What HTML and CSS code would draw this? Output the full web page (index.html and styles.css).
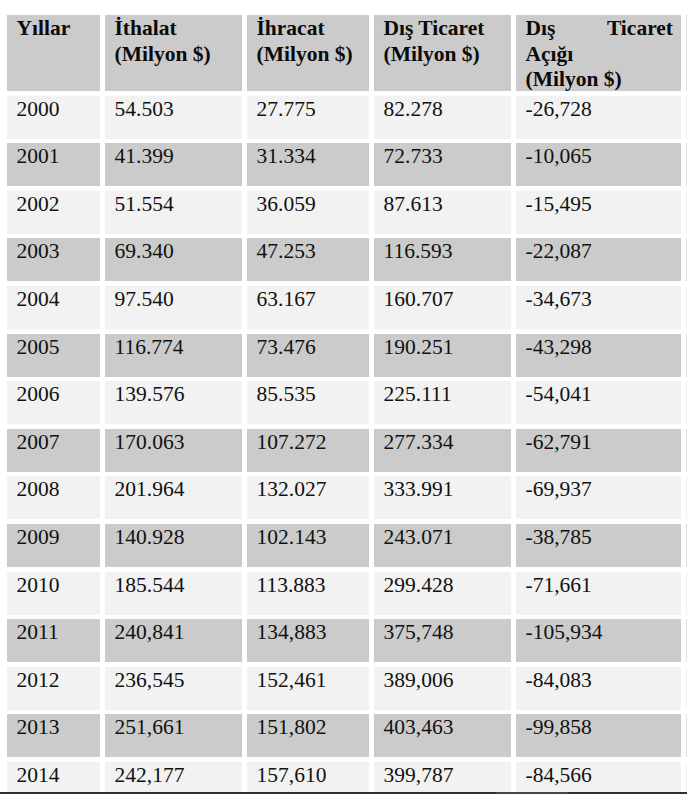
FILE: index.html
```html
<!DOCTYPE html>
<html lang="tr">
<head>
<meta charset="utf-8">
<title>Dış Ticaret</title>
<link rel="stylesheet" href="styles.css">
</head>
<body>
<div class="page">
  <div class="grid">
    <div class="cell head">Yıllar</div>
    <div class="cell head">İthalat<br>(Milyon $)</div>
    <div class="cell head">İhracat<br>(Milyon $)</div>
    <div class="cell head">Dış Ticaret<br>(Milyon $)</div>
    <div class="cell head just">Dış Ticaret Açığı<br>(Milyon $)</div>
    <div class="edge head"></div>

    <div class="cell light">2000</div><div class="cell light">54.503</div><div class="cell light">27.775</div><div class="cell light">82.278</div><div class="cell light">-26,728</div><div class="edge light"></div>
    <div class="cell dark">2001</div><div class="cell dark">41.399</div><div class="cell dark">31.334</div><div class="cell dark">72.733</div><div class="cell dark">-10,065</div><div class="edge dark"></div>
    <div class="cell light">2002</div><div class="cell light">51.554</div><div class="cell light">36.059</div><div class="cell light">87.613</div><div class="cell light">-15,495</div><div class="edge light"></div>
    <div class="cell dark">2003</div><div class="cell dark">69.340</div><div class="cell dark">47.253</div><div class="cell dark">116.593</div><div class="cell dark">-22,087</div><div class="edge dark"></div>
    <div class="cell light">2004</div><div class="cell light">97.540</div><div class="cell light">63.167</div><div class="cell light">160.707</div><div class="cell light">-34,673</div><div class="edge light"></div>
    <div class="cell dark">2005</div><div class="cell dark">116.774</div><div class="cell dark">73.476</div><div class="cell dark">190.251</div><div class="cell dark">-43,298</div><div class="edge dark"></div>
    <div class="cell light">2006</div><div class="cell light">139.576</div><div class="cell light">85.535</div><div class="cell light">225.111</div><div class="cell light">-54,041</div><div class="edge light"></div>
    <div class="cell dark">2007</div><div class="cell dark">170.063</div><div class="cell dark">107.272</div><div class="cell dark">277.334</div><div class="cell dark">-62,791</div><div class="edge dark"></div>
    <div class="cell light">2008</div><div class="cell light">201.964</div><div class="cell light">132.027</div><div class="cell light">333.991</div><div class="cell light">-69,937</div><div class="edge light"></div>
    <div class="cell dark">2009</div><div class="cell dark">140.928</div><div class="cell dark">102.143</div><div class="cell dark">243.071</div><div class="cell dark">-38,785</div><div class="edge dark"></div>
    <div class="cell light">2010</div><div class="cell light">185.544</div><div class="cell light">113.883</div><div class="cell light">299.428</div><div class="cell light">-71,661</div><div class="edge light"></div>
    <div class="cell dark">2011</div><div class="cell dark">240,841</div><div class="cell dark">134,883</div><div class="cell dark">375,748</div><div class="cell dark">-105,934</div><div class="edge dark"></div>
    <div class="cell light">2012</div><div class="cell light">236,545</div><div class="cell light">152,461</div><div class="cell light">389,006</div><div class="cell light">-84,083</div><div class="edge light"></div>
    <div class="cell dark">2013</div><div class="cell dark">251,661</div><div class="cell dark">151,802</div><div class="cell dark">403,463</div><div class="cell dark">-99,858</div><div class="edge dark"></div>
    <div class="cell light">2014</div><div class="cell light">242,177</div><div class="cell light">157,610</div><div class="cell light">399,787</div><div class="cell light">-84,566</div><div class="edge light"></div>
  </div>
</div>
<div class="scrollbar"><div class="thumb"></div></div>
</body>
</html>
```

FILE: styles.css
```css
html, body {
  margin: 0;
  padding: 0;
  background: #ffffff;
  overflow: hidden;
  height: 794px;
}

.page {
  padding: 15px 0 0 7px;
}

.grid {
  display: grid;
  grid-template-columns: 93px 137px 122px 137px 165px 1px;
  grid-template-rows: 76px repeat(15, 43px);
  column-gap: 5px;
  row-gap: 4.6px;
  font-family: "Liberation Serif", "Times New Roman", serif;
  font-size: 21.5px;
  line-height: 25.7px;
  color: #111111;
}

.cell {
  padding: 1px 8px 0 9.5px;
  box-sizing: border-box;
}

.head {
  background: #cbcbcb;
  font-weight: bold;
  color: #0b0b0b;
}

.just {
  text-align: justify;
}

.light {
  background: #f2f2f2;
}

.dark {
  background: #cbcbcb;
}

.edge.light { background: #f4f4f4; }
.edge.dark { background: #dedede; }
.edge.head { background: #e2e2e2; }

.scrollbar {
  position: fixed;
  left: 0;
  right: 0;
  bottom: 0;
  height: 2px;
  background: #263238;
}

.thumb {
  position: absolute;
  left: 496px;
  width: 72px;
  top: 0;
  bottom: 0;
  background: #3b4a52;
}
```
